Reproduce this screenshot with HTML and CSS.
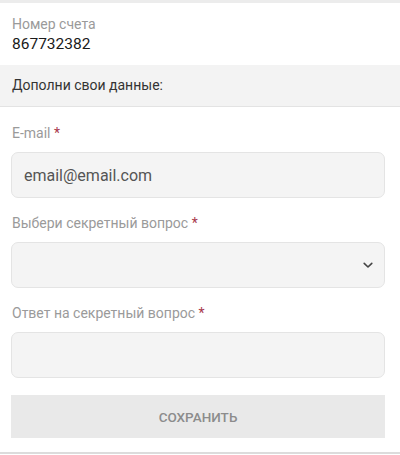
FILE: index.html
```html
<!DOCTYPE html>
<html lang="ru">
<head>
<meta charset="utf-8">
<link rel="stylesheet" href="styles.css">
</head>
<body>
<div class="top-band"></div>
<section class="account">
  <div class="account-label">Номер счета</div>
  <div class="account-number">867732382</div>
</section>
<div class="section-title">Дополни свои данные:</div>
<form class="form">
  <label class="field-label">E-mail <span class="req">*</span></label>
  <div class="input"><span class="input-value">email@email.com</span></div>
  <label class="field-label">Выбери секретный вопрос <span class="req">*</span></label>
  <div class="input select">
    <svg class="chevron" width="10" height="7" viewBox="0 0 10 7"><path d="M1.2 1.4 L5 5 L8.8 1.4" fill="none" stroke="#444" stroke-width="1.6" stroke-linecap="round" stroke-linejoin="round"/></svg>
  </div>
  <label class="field-label">Ответ на секретный вопрос <span class="req">*</span></label>
  <div class="input"></div>
  <div class="button">СОХРАНИТЬ</div>
</form>
<div class="bottom-line"></div>
</body>
</html>
```
FILE: styles.css
```css
html, body {
  margin: 0;
  padding: 0;
  background: #fff;
  font-family: Roboto, "Liberation Sans", sans-serif;
  width: 400px;
  height: 455px;
  overflow: hidden;
}
.top-band {
  height: 3px;
  background: #ececec;
}
.account {
  padding: 12px 12px 11px 12px;
}
.account-label {
  font-size: 14px;
  line-height: 19px;
  color: #9a9a9a;
}
.account-number {
  font-size: 15.5px;
  line-height: 20px;
  color: #1a1a1a;
}
.section-title {
  height: 41px;
  line-height: 41px;
  padding: 0 12px;
  background: #f3f3f3;
  border-bottom: 1px solid #e3e3e3;
  font-size: 14px;
  color: #333;
}
.form {
  display: flex;
  flex-direction: column;
  padding: 17px 15px 0 11px;
}
.field-label {
  display: block;
  font-size: 14px;
  line-height: 18px;
  color: #9a9a9a;
  padding-left: 1px;
  margin-bottom: 10px;
}
.req {
  color: #a8384c;
}
.input {
  box-sizing: border-box;
  height: 46px;
  border: 1px solid #e4e4e4;
  border-radius: 7px;
  background: #f4f4f4;
  margin-bottom: 16px;
  display: flex;
  align-items: center;
  padding: 0 12px;
}
.input-value {
  font-size: 16px;
  color: #555;
}
.select {
  justify-content: flex-end;
  padding-right: 11px;
}
.chevron {
  display: block;
}
.button {
  margin-top: 1px;
  height: 43px;
  background: #e9e9e9;
  display: flex;
  align-items: center;
  justify-content: center;
  font-size: 13.5px;
  font-weight: 500;
  color: #8c8c8c;
}
.bottom-line {
  margin-top: 14px;
  height: 2px;
  background: #dcdcdc;
}
```
